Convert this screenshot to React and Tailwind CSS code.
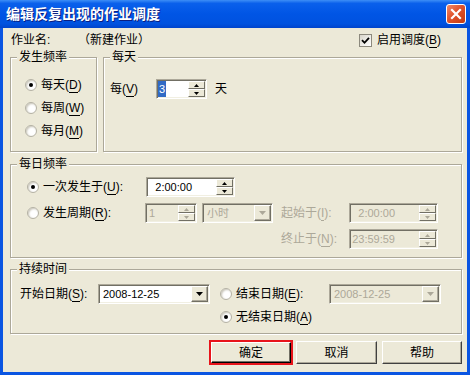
import React from 'react';

/* Windows XP style "edit recurring job schedule" dialog */

const Key = ({ k }) => <u className="no-underline border-b border-current leading-[11px]">{k}</u>;

const Radio = ({ checked }) => (
  <span className="w-[12px] h-[12px] shrink-0 rounded-full bg-white border border-[#B4B1A3] shadow-[inset_1px_1px_2px_#C9C6B9] flex items-center justify-center">
    {checked && <span className="w-[4px] h-[4px] rounded-full bg-black" />}
  </span>
);

const Arrow = ({ up, disabled, big }) => (
  <svg width={big ? 7 : 5} height={big ? 4 : 3} viewBox={big ? '0 0 7 4' : '0 0 5 3'}>
    <polygon
      points={big ? (up ? '0,4 3.5,0 7,4' : '0,0 7,0 3.5,4') : up ? '0,3 2.5,0 5,3' : '0,0 5,0 2.5,3'}
      fill={disabled ? '#ACA899' : '#000'}
    />
  </svg>
);

const Spin = ({ disabled }) => (
  <div className="w-[17px] h-full flex flex-col shrink-0">
    <div className="flex-1 flex items-center justify-center bg-[#ECE9D8] border border-t-white border-l-white border-r-[#716F64] border-b-[#716F64]">
      <Arrow up disabled={disabled} />
    </div>
    <div className="flex-1 flex items-center justify-center bg-[#ECE9D8] border border-t-white border-l-white border-r-[#716F64] border-b-[#716F64]">
      <Arrow disabled={disabled} />
    </div>
  </div>
);

const DropBtn = ({ disabled }) => (
  <div className="w-[17px] h-full shrink-0 flex items-center justify-center bg-[#ECE9D8] border border-t-white border-l-white border-r-[#716F64] border-b-[#716F64] shadow-[inset_-1px_-1px_0_#ACA899]">
    <Arrow big disabled={disabled} />
  </div>
);

const Field = ({ className, children }) => (
  <div className={'h-[20px] flex items-center p-[1px] border border-t-[#ACA899] border-l-[#ACA899] border-r-white border-b-white shadow-[inset_1px_1px_0_#716F64,inset_-1px_-1px_0_#F1EFE2] ' + className}>
    {children}
  </div>
);

const TimeField = ({ value, disabled, className }) => (
  <Field className={(disabled ? 'bg-[#ECE9D8] text-[#ACA899] ' : 'bg-white text-black ') + className}>
    <span className="w-[44px] text-right text-[11px]">{value}</span>
    <span className="flex-1" />
    <Spin disabled={disabled} />
  </Field>
);

const Combo = ({ value, disabled, className }) => (
  <Field className={(disabled ? 'bg-[#ECE9D8] text-[#ACA899] ' : 'bg-white text-black ') + className}>
    <span className="flex-1 pl-[3px] text-[11px] truncate">{value}</span>
    <DropBtn disabled={disabled} />
  </Field>
);

const Group = ({ label, className, children }) => (
  <div className={'relative border border-[#ACA899] shadow-[inset_1px_1px_0_#fff,1px_1px_0_#fff] ' + className}>
    <span className="absolute left-[6px] -top-[7px] px-[2px] bg-[#ECE9D8] leading-[13px]">{label}</span>
    {children}
  </div>
);

const Button = ({ children, className }) => (
  <div className={'h-[23px] flex items-center justify-center bg-[#ECE9D8] border border-t-white border-l-white border-r-[#404040] border-b-[#404040] shadow-[inset_-1px_-1px_0_#ACA899] ' + className}>
    {children}
  </div>
);

export default function App() {
  return (
    <div className="w-[470px] h-[375px] flex flex-col bg-[#0A55E2] font-['Liberation_Sans','Noto_Sans_CJK_SC',sans-serif] select-none">
      {/* Title bar */}
      <div className="h-[28px] shrink-0 flex items-center pl-[6px] pr-[4px] bg-[linear-gradient(to_bottom,#3D8EF6_0%,#0A60EB_12%,#0055E5_50%,#0052DF_85%,#0044CC_100%)]">
        <span className="text-white font-bold text-[14px] leading-none [text-shadow:1px_1px_0_#0A1E80]">编辑反复出现的作业调度</span>
        <div className="ml-auto w-[20px] h-[20px] rounded-[3px] border border-white bg-[linear-gradient(135deg,#F08A6A_0%,#E0532C_45%,#C23A12_100%)] flex items-center justify-center">
          <svg width="12" height="12" viewBox="0 0 12 12">
            <path d="M2 2 L10 10 M10 2 L2 10" stroke="#fff" strokeWidth="2.2" strokeLinecap="square" />
          </svg>
        </div>
      </div>

      {/* Body */}
      <div className="flex-1 mx-[3px] mb-[3px] bg-[#ECE9D8] flex flex-col pt-[5px] pl-[7px] pr-[5px] text-[12px] text-black leading-none">
        <div className="h-[14px] flex items-center">
          <span className="ml-[1px] w-[67px]">作业名:</span>
          <span className="w-[281px]">（新建作业）</span>
          <span className="w-[13px] h-[13px] shrink-0 border border-[#8C897D] bg-[linear-gradient(135deg,#D8D5CA,#FFFFFF)] flex items-center justify-center">
            <svg width="9" height="9" viewBox="0 0 9 9">
              <path d="M1 4.2 L3.5 6.8 L8 1.8" stroke="#000" strokeWidth="1.8" fill="none" />
            </svg>
          </span>
          <span className="ml-[5px]">启用调度(<Key k="B" />)</span>
        </div>

        <div className="mt-[10px] flex gap-[6px]">
          <Group label="发生频率" className="w-[87px] h-[95px]">
            <div className="pt-[20px] pl-[14px] flex flex-col gap-[10px]">
              <div className="h-[13px] flex items-center gap-[4px]">
                <Radio checked />
                <span>每天(<Key k="D" />)</span>
              </div>
              <div className="h-[13px] flex items-center gap-[4px]">
                <Radio />
                <span>每周(<Key k="W" />)</span>
              </div>
              <div className="h-[13px] flex items-center gap-[4px]">
                <Radio />
                <span>每月(<Key k="M" />)</span>
              </div>
            </div>
          </Group>
          <Group label="每天" className="w-[359px] h-[95px]">
            <div className="pt-[21px] pl-[6px] h-[41px] flex items-center">
              <span className="w-[46px]">每(<Key k="V" />)</span>
              <Field className="w-[51px] bg-white">
                <span className="h-full flex items-center bg-[#316AC5] text-white text-[11px] px-[1px]">3</span>
                <span className="flex-1" />
                <Spin />
              </Field>
              <span className="ml-[8px]">天</span>
            </div>
          </Group>
        </div>

        <Group label="每日频率" className="mt-[12px] h-[94px]">
          <div className="pt-[12px] pl-[16px] flex flex-col gap-[6px]">
            <div className="h-[20px] flex items-center">
              <Radio checked />
              <span className="ml-[4px] w-[103px]">一次发生于(<Key k="U" />):</span>
              <TimeField value="2:00:00" className="w-[89px]" />
            </div>
            <div className="h-[20px] flex items-center">
              <Radio />
              <span className="ml-[4px] w-[102px]">发生周期(<Key k="R" />):</span>
              <Field className="w-[52px] bg-[#ECE9D8] text-[#ACA899]">
                <span className="pl-[2px] text-[11px]">1</span>
                <span className="flex-1" />
                <Spin disabled />
              </Field>
              <Combo value="小时" disabled className="ml-[5px] w-[71px]" />
              <span className="ml-[8px] w-[68px] text-[#ACA899]">起始于(<Key k="I" />):</span>
              <TimeField value="2:00:00" disabled className="w-[89px]" />
            </div>
            <div className="h-[20px] flex items-center">
              <span className="ml-[254px] w-[68px] text-[#ACA899]">终止于(<Key k="N" />):</span>
              <TimeField value="23:59:59" disabled className="w-[89px]" />
            </div>
          </div>
        </Group>

        <Group label="持续时间" className="mt-[11px] h-[65px]">
          <div className="pt-[14px] pl-[9px] flex flex-col gap-[6px]">
            <div className="h-[20px] flex items-center">
              <span className="w-[78px]">开始日期(<Key k="S" />):</span>
              <Combo value="2008-12-25" className="w-[112px]" />
              <span className="ml-[10px]"><Radio /></span>
              <span className="ml-[4px] w-[93px]">结束日期(<Key k="E" />):</span>
              <Combo value="2008-12-25" disabled className="w-[112px]" />
            </div>
            <div className="h-[13px] flex items-center ml-[200px]">
              <Radio checked />
              <span className="ml-[4px]">无结束日期(<Key k="A" />)</span>
            </div>
          </div>
        </Group>

        <div className="mt-[6px] h-[25px] flex items-center justify-end">
          <div className="w-[84px] h-[25px] border-2 border-[#E8141B] flex">
            <div className="flex-1 flex items-center justify-center bg-[#ECE9D8] border border-t-white border-l-white border-r-black border-b-black shadow-[inset_-1px_-1px_0_#716F64]">
              确定
            </div>
          </div>
          <Button className="ml-[3px] w-[81px]">取消</Button>
          <Button className="ml-[5px] w-[80px]">帮助</Button>
        </div>
      </div>
    </div>
  );
}
